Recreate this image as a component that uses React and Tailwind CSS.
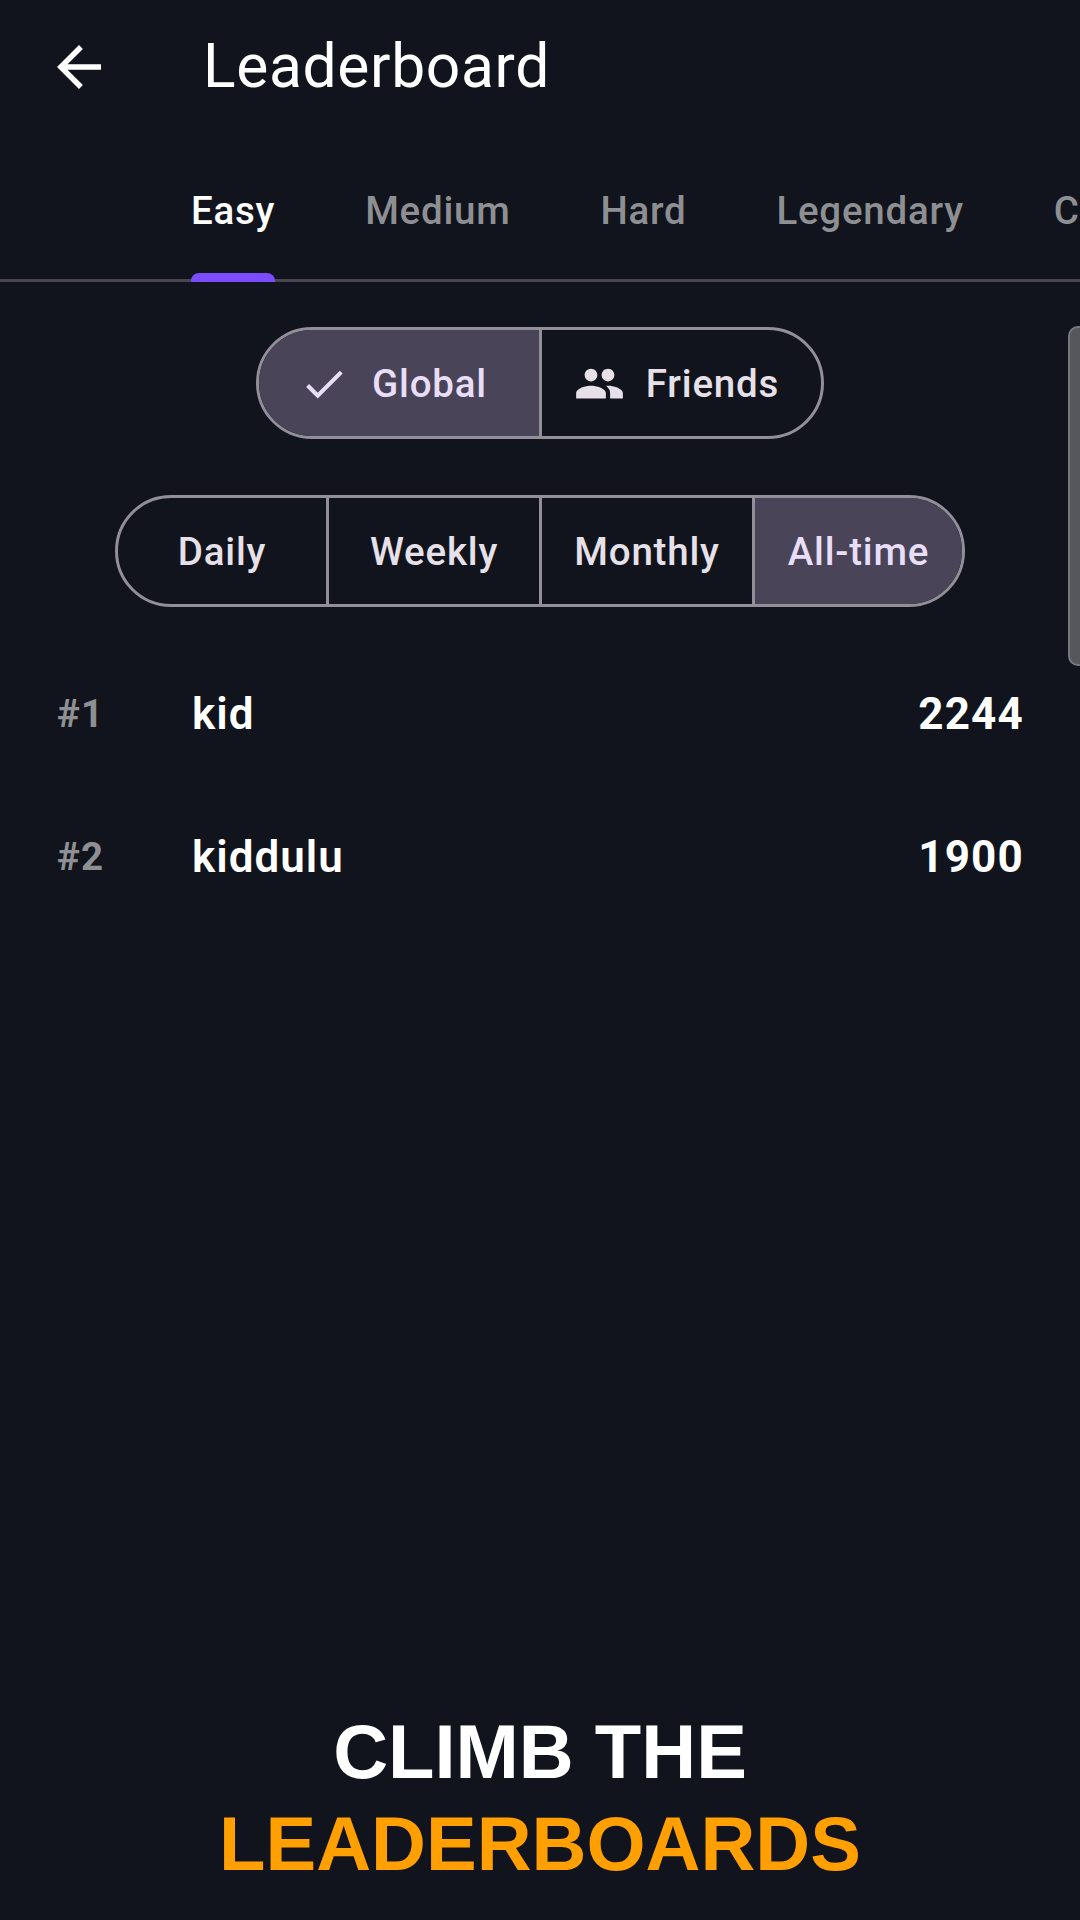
const tabs = ["Easy", "Medium", "Hard", "Legendary", "Challenge"];
const periods = ["Daily", "Weekly", "Monthly", "All-time"];
const rows = [
  { rank: "#1", name: "kid", score: "2244" },
  { rank: "#2", name: "kiddulu", score: "1900" },
];

function ArrowBack() {
  return (
    <svg viewBox="0 0 24 24" className="h-[66px] w-[66px] fill-white">
      <path d="M20 11H7.83l5.59-5.59L12 4l-8 8 8 8 1.41-1.41L7.83 13H20v-2z" />
    </svg>
  );
}

function CheckIcon() {
  return (
    <svg viewBox="0 0 24 24" className="h-[50px] w-[50px] fill-[#e8def8]">
      <path d="M9 16.17L4.83 12l-1.42 1.41L9 19 21 7l-1.41-1.41z" />
    </svg>
  );
}

function GroupIcon() {
  return (
    <svg viewBox="0 0 24 24" className="h-[51px] w-[51px] fill-[#e6e0e9]">
      <path d="M16 11c1.66 0 2.99-1.34 2.99-3S17.66 5 16 5c-1.66 0-3 1.34-3 3s1.34 3 3 3zm-8 0c1.66 0 2.99-1.34 2.99-3S9.66 5 8 5C6.34 5 5 6.34 5 8s1.34 3 3 3zm0 2c-2.33 0-7 1.17-7 3.5V19h14v-2.5c0-2.33-4.67-3.5-7-3.5zm8 0c-.29 0-.62.02-.97.05 1.16.84 1.97 1.97 1.97 3.45V19h6v-2.5c0-2.33-4.67-3.5-7-3.5z" />
    </svg>
  );
}

export default function App() {
  return (
    <div className="relative flex h-[1920px] w-[1080px] flex-col overflow-hidden bg-[#11141c] font-['Roboto',sans-serif] text-white">
      {/* top bar */}
      <div className="flex h-[134px] items-center pl-[46px]">
        <ArrowBack />
        <h1 className="ml-[91px] text-[60.5px] leading-none font-normal tracking-[0.66px]">Leaderboard</h1>
      </div>

      {/* difficulty tabs */}
      <div className="flex h-[148px] items-start overflow-hidden pl-[191px] shadow-[inset_0_-3px_0_#49454f]">
        {tabs.map((tab, i) => (
          <div key={tab} className="mr-[90px] flex h-[148px] shrink-0 flex-col items-center">
            <span
              className={
                "mt-[52px] text-[38.5px] leading-[50px] font-medium tracking-[0.75px] " +
                (i === 0 ? "text-white" : "text-[#8e8f93]")
              }
            >
              {tab}
            </span>
            {i === 0 && <div className="mt-auto h-[9px] w-full rounded-t-[8px] bg-[#7c4dff]" />}
          </div>
        ))}
      </div>

      {/* scope */}
      <div className="mt-[45px] flex justify-center">
        <div className="grid h-[112px] w-[568px] grid-cols-[283px_1fr] overflow-hidden rounded-full border-[3px] border-[#938f99]">
          <div className="flex items-center justify-center gap-[23px] border-r-[3px] border-[#938f99] bg-[#4a4458] pt-[1px] pr-[12px] text-[38.5px] font-medium tracking-[0.8px] text-[#e8def8]">
            <CheckIcon />
            Global
          </div>
          <div className="flex items-center justify-center gap-[21px] pt-[1px] pr-[10px] text-[38.5px] font-medium tracking-[0.8px] text-[#e6e0e9]">
            <GroupIcon />
            Friends
          </div>
        </div>
      </div>

      {/* period */}
      <div className="mt-[56px] flex justify-center">
        <div className="grid h-[112px] w-[850px] grid-cols-[211px_213px_213px_207px] overflow-hidden rounded-full border-[3px] border-[#938f99]">
          {periods.map((period, i) => (
            <div
              key={period}
              className={
                "flex items-center justify-center pt-[2px] text-[38.5px] font-medium tracking-[0.8px] " +
                (i === 3
                  ? "bg-[#4a4458] text-[#e8def8]"
                  : "border-r-[3px] border-[#938f99] text-[#e6e0e9]")
              }
            >
              {period}
            </div>
          ))}
        </div>
      </div>

      {/* scores */}
      <div className="mt-[35px] flex flex-col">
        {rows.map((row) => (
          <div key={row.rank} className="flex h-[143px] items-center pr-[56px] pl-[57px]">
            <span className="w-[135px] text-[38.5px] font-bold tracking-[1.2px] text-[#8e8f93]">{row.rank}</span>
            <span className="flex-1 text-[44px] font-semibold tracking-[1px]">{row.name}</span>
            <span className="text-[44px] font-bold tracking-[1.2px]">{row.score}</span>
          </div>
        ))}
      </div>

      {/* caption */}
      <div className="mt-auto mb-[30px] text-center font-['Liberation_Sans',Arial,sans-serif] text-[76px] leading-[92px] font-bold">
        <div>CLIMB THE</div>
        <div className="text-[#ff9f00]">LEADERBOARDS</div>
      </div>

      {/* scroll thumb */}
      <div className="absolute top-[326px] right-[-12px] h-[340px] w-[24px] rounded-[10px] border-[2px] border-[#77787c] bg-[#56575c]" />
    </div>
  );
}
